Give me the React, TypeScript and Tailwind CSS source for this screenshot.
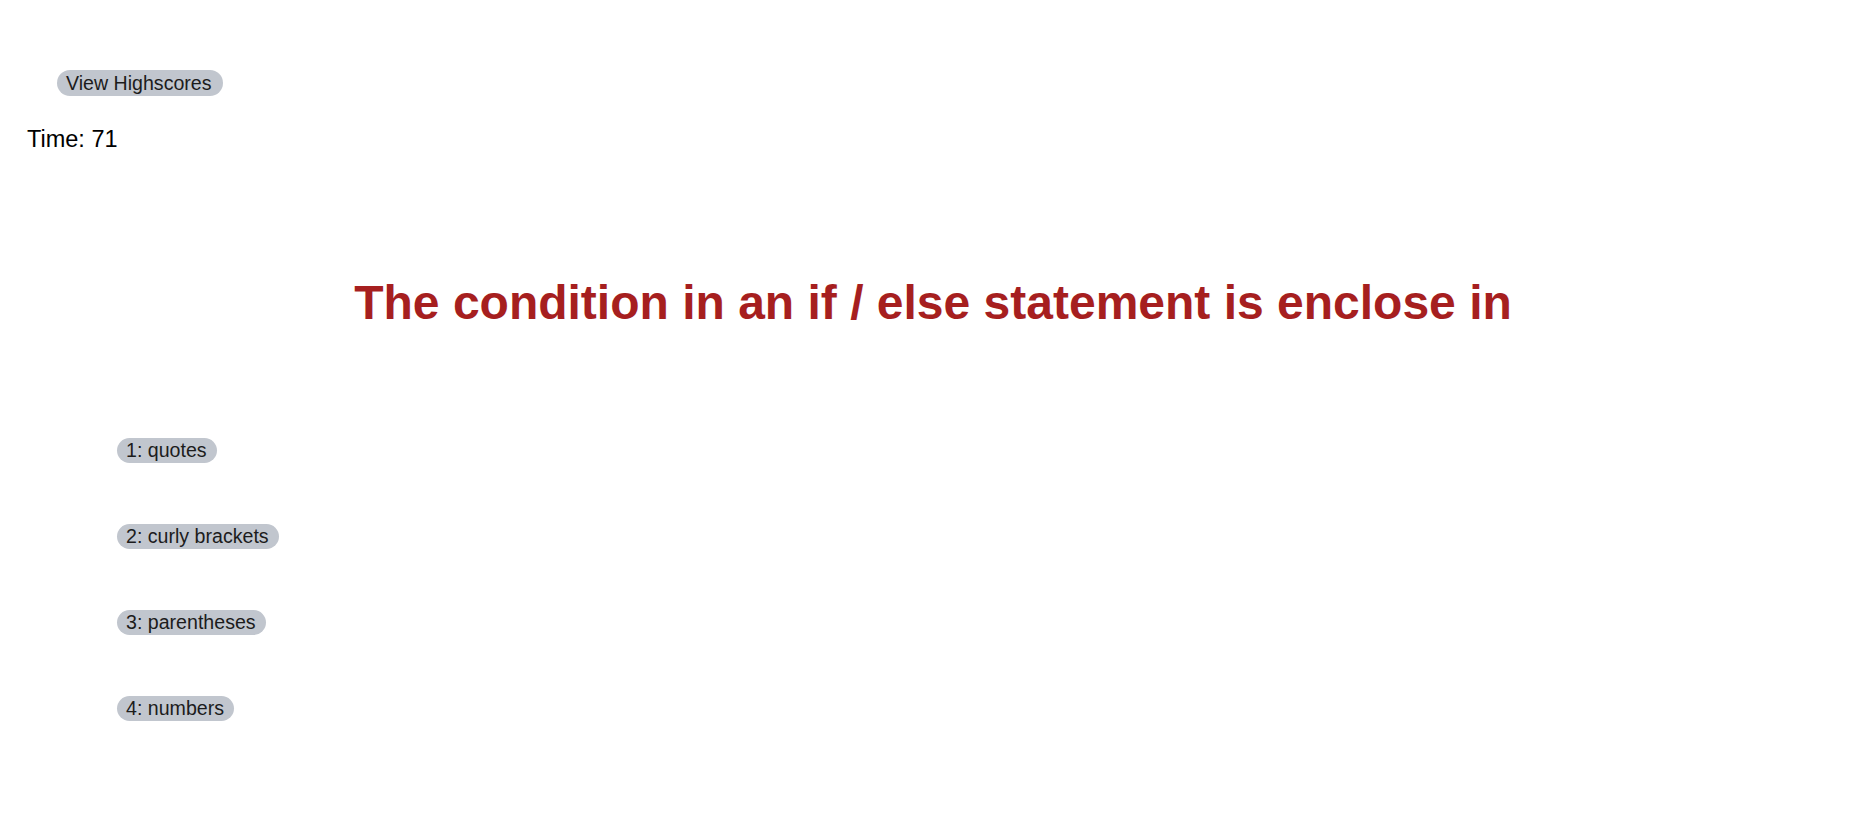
import { useState } from 'react';

const answers = ['1: quotes', '2: curly brackets', '3: parentheses', '4: numbers'];

const App = () => {
  const [time] = useState(71);

  return (
    <div className="min-h-screen w-full bg-white font-['Liberation_Sans',Arial,sans-serif] text-black">
      <header className="pt-[70px]">
        <button className="ml-[57px] block h-[26px] rounded-full bg-[#c1c6ce] pl-[9px] pr-[11px] text-[19.6px] leading-[26px] text-[#1c1c1c]">
          View Highscores
        </button>
        <p className="ml-[27px] mt-[29px] text-[23.5px] leading-[28px]">Time: {time}</p>
      </header>

      <main>
        <h1 className="mt-[122px] pr-[7px] text-center text-[48px] font-bold leading-[56px] text-[#a61f1f]">
          The condition in an if / else statement is enclose in
        </h1>

        <ul className="ml-[117px] mt-[107px] flex flex-col items-start gap-[61px]">
          {answers.map((a) => (
            <li key={a} className="flex">
              <button className="h-[25px] rounded-full bg-[#c1c6ce] pl-[9px] pr-[10px] text-[19.6px] leading-[25px] text-[#1c1c1c]">
                {a}
              </button>
            </li>
          ))}
        </ul>
      </main>
    </div>
  );
};

export default App;
